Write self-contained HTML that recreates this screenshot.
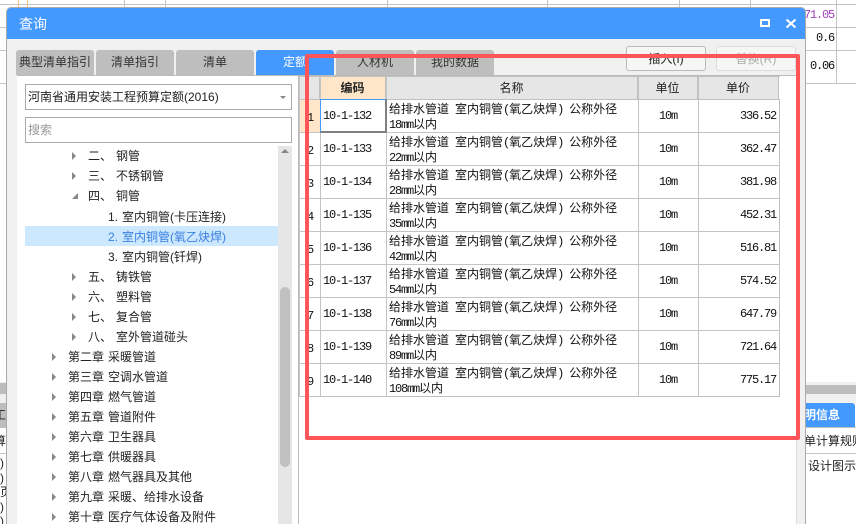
<!DOCTYPE html>
<html><head><meta charset="utf-8"><style>
html,body{margin:0;padding:0;width:856px;height:524px;overflow:hidden}
body{background:#fff;font-family:"Liberation Sans","Noto Sans CJK SC",sans-serif;font-size:12px;color:#222}
div{position:absolute;box-sizing:border-box;white-space:nowrap}
#w{left:0;top:0;width:856px;height:524px;overflow:hidden;background:#fff}
.l{background:#c4c4c4}
.tab{top:50px;width:78px;height:25px;background:#bebebe;border-radius:3px 3px 0 0;text-align:center;line-height:25px;font-size:12px;color:#333}
.t{height:20px;line-height:20px;font-size:12px;color:#222;word-spacing:.7px}
.g{display:inline-block;width:4px}
.a{width:0;height:0;border-left:4px solid #888;border-top:4px solid transparent;border-bottom:4px solid transparent}
.h{top:77px;height:23px;line-height:22px;text-align:center;background:#e6e6e6;font-size:12px;color:#222;border-right:1px solid #c0c0c0}
.m,i{font-family:"Liberation Mono",monospace;font-size:12px;letter-spacing:-1.2px;color:#111;font-style:normal;white-space:pre}
.m{line-height:16px}
.n{font-size:12px;line-height:14px;color:#111}
</style></head><body><div id="w">
<div class="l" style="left:0;top:4px;width:856px;height:1px"></div>
<div class="l" style="left:805px;top:27px;width:51px;height:1px"></div>
<div class="l" style="left:805px;top:50px;width:51px;height:1px"></div>
<div class="l" style="left:805px;top:83px;width:51px;height:1px"></div>
<div class="l" style="left:0;top:27px;width:7px;height:1px"></div>
<div class="l" style="left:0;top:50px;width:7px;height:1px"></div>
<div class="l" style="left:0;top:83px;width:7px;height:1px"></div>
<div class="l" style="left:836px;top:0;width:1px;height:83px"></div>
<div style="left:18px;top:0;width:1px;height:8px;background:#f0c080"></div>
<div style="left:27px;top:0;width:1px;height:8px;background:#f0c080"></div>
<div class="l" style="left:124px;top:0;width:1px;height:8px"></div>
<div class="l" style="left:165px;top:0;width:1px;height:8px"></div>
<div class="l" style="left:387px;top:0;width:1px;height:8px"></div>
<div class="l" style="left:547px;top:0;width:1px;height:8px"></div>
<div class="l" style="left:679px;top:0;width:1px;height:8px"></div>
<div class="l" style="left:750px;top:0;width:1px;height:8px"></div>
<div class="m" style="left:804px;top:7px;color:#a040c0">71.05</div>
<div class="m" style="left:816px;top:30px">0.6</div>
<div class="m" style="left:810px;top:58px">0.06</div>
<!-- bottom background -->
<div style="left:0;top:382px;width:7px;height:21px;background:#f0f0f0"></div>
<div style="left:0;top:383px;width:7px;height:11px;background:#bdbdbd"></div>
<div style="left:0;top:403px;width:7px;height:25px;background:#bdbdbd;line-height:25px;font-size:12px;overflow:hidden"><span style="margin-left:-6px">工</span></div>
<div style="left:0;top:432px;line-height:18px;font-size:12px;width:7px;overflow:hidden"><span style="margin-left:-6px">算</span></div>
<div class="l" style="left:0;top:453px;width:7px;height:1px"></div>
<div style="left:0;top:456px;width:7px;height:68px;overflow:hidden;font-size:12px;line-height:14.5px;color:#222">)<br>)<br>页<br>)<br>)</div>
<div style="left:805px;top:382px;width:51px;height:21px;background:#f0f0f0"></div>
<div style="left:805px;top:385px;width:51px;height:9px;background:#bdbdbd"></div>
<div style="left:806px;top:403px;width:49px;height:25px;background:#4499ff;color:#fff;font-size:12px;font-weight:bold;line-height:25px;border-radius:0 3px 0 0;overflow:hidden"><span style="margin-left:-2px">明信息</span></div>
<div class="l" style="left:806px;top:427px;width:50px;height:1px"></div>
<div style="left:806px;top:432px;width:50px;overflow:hidden;font-size:12px;line-height:18px"><span style="margin-left:-2px">单计算规则</span></div>
<div class="l" style="left:806px;top:453px;width:50px;height:1px"></div>
<div style="left:806px;top:457px;width:50px;overflow:hidden;font-size:12px;line-height:18px"><span style="margin-left:2px">设计图示</span></div>
<!-- dialog -->
<div style="left:6px;top:7px;width:800px;height:530px;background:#f0f0f0;border:1px solid #aaa;border-radius:5px 5px 0 0"></div>
<div style="left:7px;top:8px;width:798px;height:31px;background:#4499ff;border-radius:4px 4px 0 0;color:#fff;font-size:14px;line-height:33px;padding-left:12px">查询</div>
<div style="left:760px;top:19px;width:10px;height:8px;border:2px solid #fff"></div>
<svg style="position:absolute;left:785px;top:18px" width="12" height="12"><path d="M1.5 1.5L10.5 9.5M10.5 1.5L1.5 9.5" stroke="#fff" stroke-width="2"/></svg>
<div class="tab" style="left:16px">典型清单指引</div>
<div class="tab" style="left:96px">清单指引</div>
<div class="tab" style="left:176px">清单</div>
<div class="tab" style="left:256px;background:#4499ff;color:#fff">定额</div>
<div class="tab" style="left:336px">人材机</div>
<div class="tab" style="left:416px">我的数据</div>
<div style="left:626px;top:46px;width:80px;height:25px;background:#f6f6f6;border:1px solid #bbb;border-radius:3px;text-align:center;line-height:25px;color:#222">插入(I)</div>
<div style="left:716px;top:46px;width:80px;height:25px;background:#f6f6f6;border:1px solid #ddd;border-radius:3px;text-align:center;line-height:25px;color:#aaa">替换(R)</div>
<!-- left panel -->
<div style="left:17px;top:75px;width:281px;height:449px;background:#fff;border-top:1px solid #bbb"></div>
<div style="left:25px;top:84px;width:267px;height:26px;border:1px solid #aaa;background:#fff;line-height:25px;padding-left:2px;font-size:12px;color:#222">河南省通用安装工程预算定额(2016)</div>
<div style="left:280px;top:96px;width:0;height:0;border-top:3px solid #888;border-left:3px solid transparent;border-right:3px solid transparent"></div>
<div style="left:25px;top:117px;width:267px;height:26px;border:1px solid #aaa;background:#fff;line-height:25px;padding-left:2px;color:#999">搜索</div>
<div style="left:278px;top:146px;width:14px;height:378px;background:#e6e6e6"></div>
<div style="left:281px;top:149px;width:0;height:0;border-bottom:4px solid #888;border-left:4px solid transparent;border-right:4px solid transparent"></div>
<div style="left:280px;top:287px;width:10px;height:180px;background:#c0c0c0;border-radius:5px"></div>
<div style="left:25px;top:226px;width:253px;height:20px;background:#cce8ff"></div>
<div class="a" style="left:72px;top:152px"></div><div class="t" style="left:88px;top:146px">二、<span class="g"></span>钢管</div>
<div class="a" style="left:72px;top:172px"></div><div class="t" style="left:88px;top:166px">三、<span class="g"></span>不锈钢管</div>
<div style="left:72px;top:193px;width:0;height:0;border-bottom:6px solid #888;border-left:6px solid transparent"></div><div class="t" style="left:88px;top:186px">四、<span class="g"></span>铜管</div>
<div class="t" style="left:108px;top:207px">1. 室内铜管(卡压连接)</div>
<div class="t" style="left:108px;top:227px;color:#3a7fe0">2. 室内铜管(氧乙炔焊)</div>
<div class="t" style="left:108px;top:247px">3. 室内铜管(钎焊)</div>
<div class="a" style="left:72px;top:273px"></div><div class="t" style="left:88px;top:267px">五、<span class="g"></span>铸铁管</div>
<div class="a" style="left:72px;top:293px"></div><div class="t" style="left:88px;top:287px">六、<span class="g"></span>塑料管</div>
<div class="a" style="left:72px;top:313px"></div><div class="t" style="left:88px;top:307px">七、<span class="g"></span>复合管</div>
<div class="a" style="left:72px;top:333px"></div><div class="t" style="left:88px;top:327px">八、<span class="g"></span>室外管道碰头</div>
<div class="a" style="left:52px;top:353px"></div><div class="t" style="left:68px;top:347px">第二章 采暖管道</div>
<div class="a" style="left:52px;top:373px"></div><div class="t" style="left:68px;top:367px">第三章 空调水管道</div>
<div class="a" style="left:52px;top:393px"></div><div class="t" style="left:68px;top:387px">第四章 燃气管道</div>
<div class="a" style="left:52px;top:413px"></div><div class="t" style="left:68px;top:407px">第五章 管道附件</div>
<div class="a" style="left:52px;top:433px"></div><div class="t" style="left:68px;top:427px">第六章 卫生器具</div>
<div class="a" style="left:52px;top:453px"></div><div class="t" style="left:68px;top:447px">第七章 供暖器具</div>
<div class="a" style="left:52px;top:473px"></div><div class="t" style="left:68px;top:467px">第八章 燃气器具及其他</div>
<div class="a" style="left:52px;top:493px"></div><div class="t" style="left:68px;top:487px">第九章 采暖、给排水设备</div>
<div class="a" style="left:52px;top:513px"></div><div class="t" style="left:68px;top:507px">第十章 医疗气体设备及附件</div>
<!-- right panel -->
<div style="left:298px;top:75px;width:499px;height:449px;background:#fff;border-top:1px solid #bbb;border-left:1px solid #bbb;border-right:1px solid #ddd"></div>
<div style="left:299px;top:76px;width:481px;height:1px;background:#c0c0c0"></div>
<div class="h" style="left:299px;width:21px"></div>
<div class="h" style="left:320px;width:66px;background:#ffe6c8;font-weight:bold">编码</div>
<div class="h" style="left:386px;width:252px">名称</div>
<div class="h" style="left:638px;width:60px">单位</div>
<div class="h" style="left:698px;width:81px">单价</div>
<div style="left:299px;top:99px;width:481px;height:298px;border:solid #c0c0c0;border-width:1px 1px 1px 0"></div>
<div style="left:300px;top:100px;width:20px;height:32px;background:#ffe6c8"></div>
<div class="l" style="left:299px;top:77px;width:1px;height:320px"></div>
<div class="l" style="left:320px;top:77px;width:1px;height:320px"></div>
<div class="l" style="left:386px;top:77px;width:1px;height:320px"></div>
<div class="l" style="left:638px;top:77px;width:1px;height:320px"></div>
<div class="l" style="left:698px;top:77px;width:1px;height:320px"></div>
<div class="l" style="left:299px;top:132px;width:481px;height:1px"></div>
<div class="l" style="left:299px;top:165px;width:481px;height:1px"></div>
<div class="l" style="left:299px;top:198px;width:481px;height:1px"></div>
<div class="l" style="left:299px;top:231px;width:481px;height:1px"></div>
<div class="l" style="left:299px;top:264px;width:481px;height:1px"></div>
<div class="l" style="left:299px;top:297px;width:481px;height:1px"></div>
<div class="l" style="left:299px;top:330px;width:481px;height:1px"></div>
<div class="l" style="left:299px;top:363px;width:481px;height:1px"></div>
<div style="left:320px;top:99px;width:67px;height:34px;border:solid;border-width:1px 2px 2px 1px;border-color:#4499ff #808080 #808080 #4499ff;background:#fff"></div>

<div class="m" style="left:307px;top:110px">1</div><div class="m" style="left:323px;top:108px">10-1-132</div><div class="n" style="left:389px;top:102px">给排水管道<i> </i>室内铜管<i>(</i>氧乙炔焊<i>)</i><i> </i>公称外径<br><i>18mm</i>以内</div><div class="m" style="left:659px;top:108px">10m</div><div class="m" style="left:740px;top:108px">336.52</div>
<div class="m" style="left:307px;top:143px">2</div><div class="m" style="left:323px;top:141px">10-1-133</div><div class="n" style="left:389px;top:135px">给排水管道<i> </i>室内铜管<i>(</i>氧乙炔焊<i>)</i><i> </i>公称外径<br><i>22mm</i>以内</div><div class="m" style="left:659px;top:141px">10m</div><div class="m" style="left:740px;top:141px">362.47</div>
<div class="m" style="left:307px;top:176px">3</div><div class="m" style="left:323px;top:174px">10-1-134</div><div class="n" style="left:389px;top:168px">给排水管道<i> </i>室内铜管<i>(</i>氧乙炔焊<i>)</i><i> </i>公称外径<br><i>28mm</i>以内</div><div class="m" style="left:659px;top:174px">10m</div><div class="m" style="left:740px;top:174px">381.98</div>
<div class="m" style="left:307px;top:209px">4</div><div class="m" style="left:323px;top:207px">10-1-135</div><div class="n" style="left:389px;top:201px">给排水管道<i> </i>室内铜管<i>(</i>氧乙炔焊<i>)</i><i> </i>公称外径<br><i>35mm</i>以内</div><div class="m" style="left:659px;top:207px">10m</div><div class="m" style="left:740px;top:207px">452.31</div>
<div class="m" style="left:307px;top:242px">5</div><div class="m" style="left:323px;top:240px">10-1-136</div><div class="n" style="left:389px;top:234px">给排水管道<i> </i>室内铜管<i>(</i>氧乙炔焊<i>)</i><i> </i>公称外径<br><i>42mm</i>以内</div><div class="m" style="left:659px;top:240px">10m</div><div class="m" style="left:740px;top:240px">516.81</div>
<div class="m" style="left:307px;top:275px">6</div><div class="m" style="left:323px;top:273px">10-1-137</div><div class="n" style="left:389px;top:267px">给排水管道<i> </i>室内铜管<i>(</i>氧乙炔焊<i>)</i><i> </i>公称外径<br><i>54mm</i>以内</div><div class="m" style="left:659px;top:273px">10m</div><div class="m" style="left:740px;top:273px">574.52</div>
<div class="m" style="left:307px;top:308px">7</div><div class="m" style="left:323px;top:306px">10-1-138</div><div class="n" style="left:389px;top:300px">给排水管道<i> </i>室内铜管<i>(</i>氧乙炔焊<i>)</i><i> </i>公称外径<br><i>76mm</i>以内</div><div class="m" style="left:659px;top:306px">10m</div><div class="m" style="left:740px;top:306px">647.79</div>
<div class="m" style="left:307px;top:341px">8</div><div class="m" style="left:323px;top:339px">10-1-139</div><div class="n" style="left:389px;top:333px">给排水管道<i> </i>室内铜管<i>(</i>氧乙炔焊<i>)</i><i> </i>公称外径<br><i>89mm</i>以内</div><div class="m" style="left:659px;top:339px">10m</div><div class="m" style="left:740px;top:339px">721.64</div>
<div class="m" style="left:307px;top:374px">9</div><div class="m" style="left:323px;top:372px">10-1-140</div><div class="n" style="left:389px;top:366px">给排水管道<i> </i>室内铜管<i>(</i>氧乙炔焊<i>)</i><i> </i>公称外径<br><i>108mm</i>以内</div><div class="m" style="left:659px;top:372px">10m</div><div class="m" style="left:740px;top:372px">775.17</div>

<div style="left:305px;top:54px;width:495px;height:386px;border:4px solid #ff5558;border-radius:2px"></div>
</div></body></html>
